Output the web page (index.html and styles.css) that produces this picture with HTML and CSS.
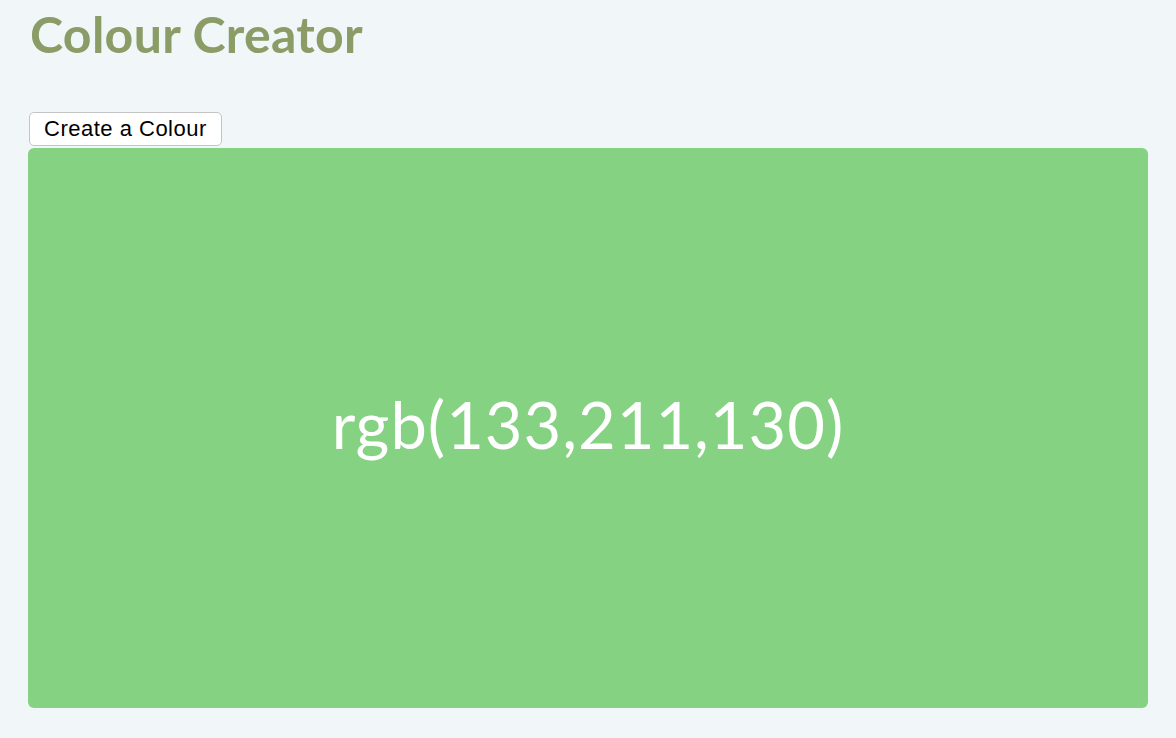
FILE: index.html
```html
<!DOCTYPE html>
<html>
<head>
<meta charset="utf-8">
<link rel="stylesheet" href="styles.css">
</head>
<body>
<main class="app">
  <h1 class="title">Colour Creator</h1>
  <button class="create-btn">Create a Colour</button>
  <section class="swatch">
    <span class="swatch-label">rgb(133,211,130)</span>
  </section>
</main>
</body>
</html>
```
FILE: styles.css
```css
html, body {
  margin: 0;
  padding: 0;
  background: #f1f6f9;
}
.app {
  padding: 0 28px;
  display: flex;
  flex-direction: column;
  align-items: flex-start;
  font-family: Lato, "Noto Sans", sans-serif;
}
.title {
  margin: 5px 0 0 2px;
  font-size: 50px;
  line-height: 58px;
  font-weight: 700;
  color: #8b9c66;
  letter-spacing: 0.3px;
}
.create-btn {
  margin: 49px 0 0 1px;
  height: 34px;
  padding: 0 14px;
  font-family: "Liberation Sans", Arial, sans-serif;
  font-size: 22px;
  letter-spacing: 0.5px;
  color: #000;
  background: #fff;
  border: 1px solid #c4c4c4;
  border-radius: 5px;
}
.swatch {
  margin-top: 2px;
  width: 1120px;
  height: 560px;
  border-radius: 6px;
  background: rgb(133,211,130);
  display: flex;
  align-items: center;
  justify-content: center;
}
.swatch-label {
  color: #fff;
  font-size: 65px;
  letter-spacing: 1px;
  font-family: Lato, "Noto Sans", sans-serif;
  margin-bottom: 8px;
}
```
